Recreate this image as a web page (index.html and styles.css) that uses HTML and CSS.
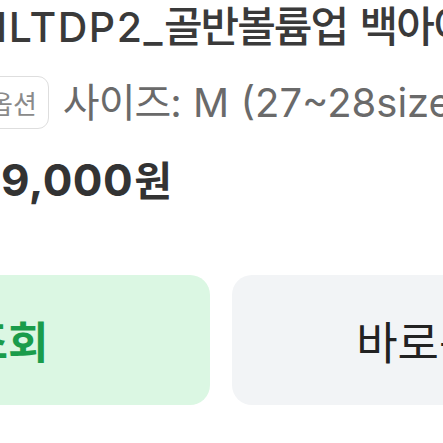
FILE: index.html
```
<!DOCTYPE html>
<html lang="ko">
<head>
<meta charset="utf-8">
<link rel="stylesheet" href="styles.css">
</head>
<body>
<div class="screen">
  <h1 class="title">ILTDP2_<span class="ko">골반볼륨업</span> <span class="ko">백아이보리</span></h1>
  <div class="option-row">
    <span class="badge">옵션</span>
    <span class="option-text"><span class="ko">사이즈</span>: M (27~28size)</span>
  </div>
  <div class="price">9,000<span class="ko">원</span></div>
  <div class="actions">
    <button class="btn btn-green">조회</button>
    <button class="btn btn-gray">바로구매</button>
  </div>
</div>
</body>
</html>
```
FILE: styles.css
```
html, body {
  margin: 0;
  padding: 0;
  background: #ffffff;
}
.screen {
  width: 443px;
  height: 443px;
  overflow: hidden;
  font-family: Inter, "Noto Sans CJK KR", sans-serif;
}
.ko {
  font-family: "Noto Sans CJK KR", sans-serif;
  line-height: 1;
}
.title {
  margin: 0 0 0 -4px;
  padding-top: 3px;
  font-size: 41px;
  font-weight: 500;
  line-height: 48px;
  color: #3a3a3a;
  white-space: nowrap;
  letter-spacing: 1.5px;
}
.title .ko {
  font-size: 42px;
  font-weight: 500;
  letter-spacing: -2px;
}
.option-row {
  display: flex;
  align-items: center;
  gap: 14px;
  margin: 25px 0 0 -23px;
  white-space: nowrap;
}
.badge {
  display: inline-flex;
  align-items: center;
  height: 53px;
  padding: 0 11px;
  border: 1.5px solid #dedede;
  border-radius: 11px;
  font-family: "Noto Sans CJK KR", sans-serif;
  font-size: 26px;
  color: #8a8a8a;
  box-sizing: border-box;
}
.option-text {
  font-size: 40px;
  line-height: 48px;
  color: #6a6a6a;
  letter-spacing: 0;
}
.option-text .ko {
  font-size: 40px;
  letter-spacing: -1px;
}
.price {
  margin: 25px 0 0 1px;
  font-size: 44px;
  font-weight: 700;
  line-height: 52px;
  color: #333333;
  white-space: nowrap;
  letter-spacing: 0.5px;
}
.price .ko {
  margin-left: 1px;
  font-size: 41px;
  letter-spacing: -2px;
}
.actions {
  display: flex;
  gap: 22px;
  margin: 69px 0 0 -194px;
}
.btn {
  flex: none;
  width: 404px;
  height: 130px;
  padding: 0;
  border: none;
  border-radius: 20px;
  font-family: "Noto Sans CJK KR", sans-serif;
  font-size: 44px;
}
.btn-green {
  background: #dbf7e3;
  color: #1a9c4b;
  font-weight: 700;
}
.btn-gray {
  padding-left: 10px;
  background: #f2f4f6;
  color: #222222;
  font-size: 45px;
  font-weight: 400;
}
```
